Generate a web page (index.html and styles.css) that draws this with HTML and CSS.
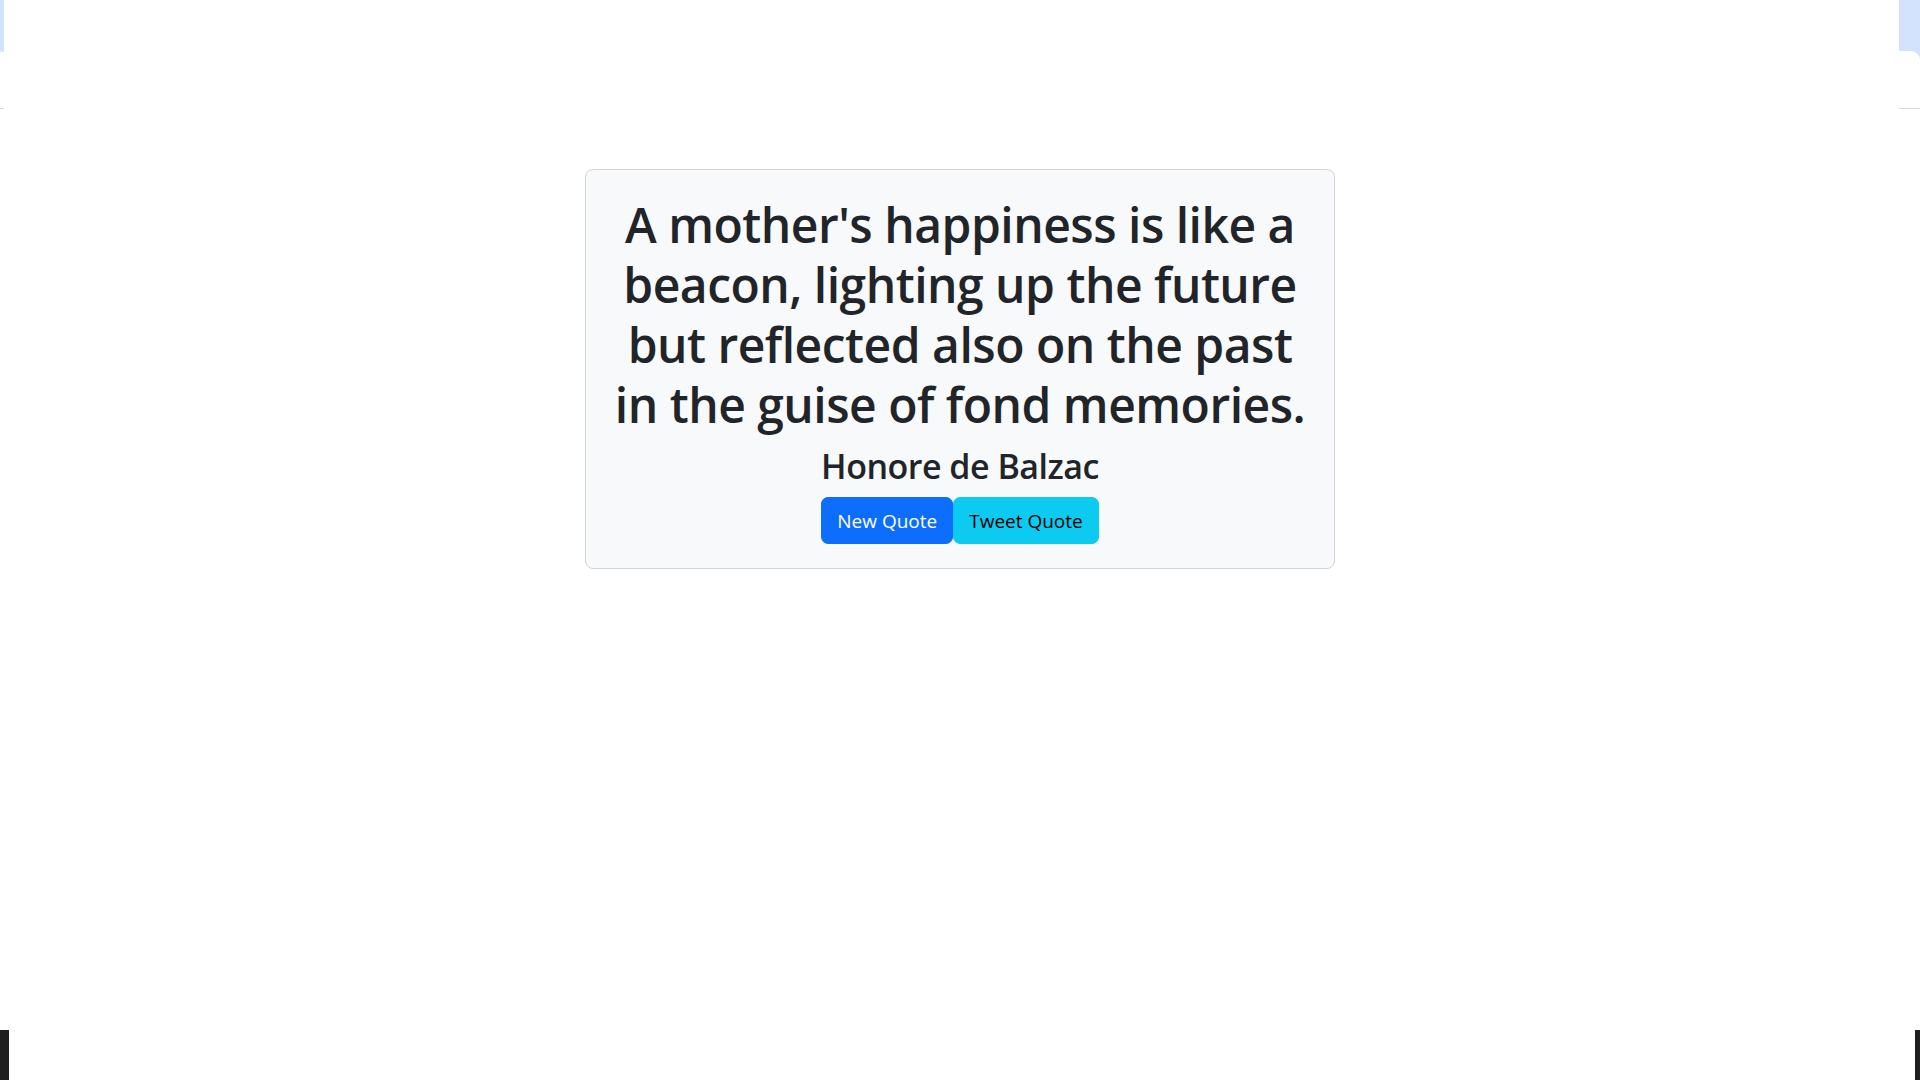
FILE: index.html
```html
<!DOCTYPE html>
<html lang="en">
<head>
<meta charset="utf-8">
<title>Random Quote Machine</title>
<link rel="stylesheet" href="styles.css">
</head>
<body>
<div class="edge edge-left-top"></div>
<div class="edge edge-right-top"></div>
<div class="edge edge-left-line"></div>
<div class="edge edge-right-line"></div>
<div class="edge edge-left-bottom"></div>
<div class="edge edge-right-bottom"></div>
<main class="page">
  <div id="quote-box" class="card">
    <h1 id="text" class="quote-text">A mother's happiness is like a beacon, lighting up the future but reflected also on the past in the guise of fond memories.</h1>
    <h3 id="author" class="quote-author">Honore de Balzac</h3>
    <div class="actions">
      <button id="new-quote" class="btn btn-primary">New Quote</button>
      <a id="tweet-quote" class="btn btn-info" href="#">Tweet Quote</a>
    </div>
  </div>
</main>
</body>
</html>
```
FILE: styles.css
```css
* { box-sizing: border-box; }
html, body { margin: 0; padding: 0; }
body {
  background: #ffffff;
  color: #212529;
  font-family: "Open Sans", "Noto Sans", sans-serif;
  width: 1920px;
  height: 1080px;
  position: relative;
  overflow: hidden;
}
.edge { position: absolute; }
.edge-left-top { left: 0; top: 0; width: 4px; height: 52px; background: #d3e3fd; border-bottom-left-radius: 2px; }
.edge-right-top { right: 0; top: 0; width: 21px; height: 60px; background: #d3e3fd; }
.edge-right-top::after { content: ""; position: absolute; left: 0; right: 0; top: 51px; height: 12px; background: #fff; border-top-right-radius: 9px; }
.edge-left-line { left: 0; top: 108px; width: 4px; height: 1px; background: #d9d9d9; }
.edge-right-line { right: 0; top: 108px; width: 21px; height: 1px; background: #d9d9d9; }
.edge-left-bottom { left: 0; top: 1030px; width: 9px; height: 50px; background: #1f1f1f; }
.edge-right-bottom { right: 0; top: 1030px; width: 5px; height: 50px; background: #1f1f1f; }

.page {
  display: flex;
  justify-content: center;
  padding-top: 169px;
}
.card {
  width: 750px;
  background: #f8f9fa;
  border: 1px solid #d3d4d5;
  border-radius: 8px;
  padding: 25px 20px 24px;
  display: flex;
  flex-direction: column;
  align-items: center;
  text-align: center;
}
.quote-text {
  margin: 0 0 10px;
  font-size: 48px;
  line-height: 60px;
  letter-spacing: -0.5px;
  font-weight: 580;
}
.quote-author {
  margin: 0 0 10px;
  font-size: 34px;
  line-height: 42px;
  letter-spacing: -0.5px;
  font-weight: 580;
}
.actions { display: flex; }
.btn {
  display: inline-block;
  font-family: inherit;
  font-size: 19px;
  line-height: 30px;
  padding: 7.5px 15px;
  border: 1px solid transparent;
  border-radius: 7px;
  text-decoration: none;
  cursor: pointer;
}
.btn-primary { background: #0d6efd; border-color: #0d6efd; color: #ffffff; }
.btn-info { background: #0dcaf0; border-color: #0dcaf0; color: #000000; }
```
